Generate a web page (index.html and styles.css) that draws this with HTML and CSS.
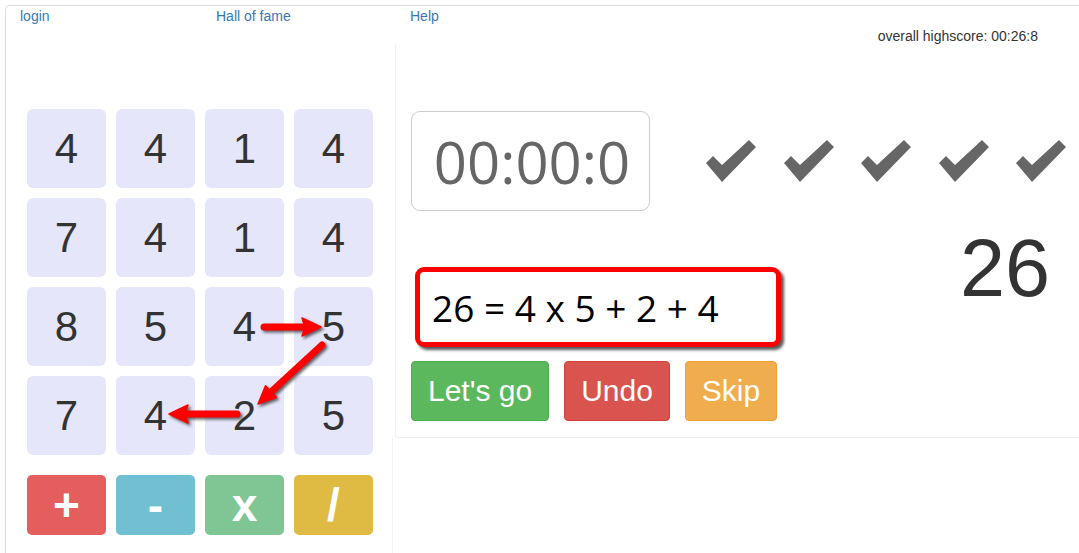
FILE: index.html
```html
<!DOCTYPE html>
<html lang="en">
<head>
<meta charset="utf-8">
<title>Numbers game</title>
<link rel="stylesheet" href="styles.css">
</head>
<body>
<div class="page">
  <nav class="nav">
    <a href="#">login</a>
    <a href="#">Hall of fame</a>
    <a href="#">Help</a>
  </nav>
  <div class="highscore">overall highscore: 00:26:8</div>
  <div class="main">
    <div class="board">
      <div class="tiles">
        <div class="tile">4</div><div class="tile">4</div><div class="tile">1</div><div class="tile">4</div>
        <div class="tile">7</div><div class="tile">4</div><div class="tile">1</div><div class="tile">4</div>
        <div class="tile">8</div><div class="tile">5</div><div class="tile">4</div><div class="tile">5</div>
        <div class="tile">7</div><div class="tile">4</div><div class="tile">2</div><div class="tile">5</div>
      </div>
      <div class="ops">
        <div class="op op-plus">+</div>
        <div class="op op-minus">-</div>
        <div class="op op-times">x</div>
        <div class="op op-div">/</div>
      </div>
    </div>
    <div class="side">
      <div class="panel">
        <div class="status">
          <div class="timer">00:00:0</div>
          <div class="checks">
            <svg class="check" viewBox="0 0 51 42"><polygon points="1,23 8,16 17,25 44,0 51,7 17,42"/></svg>
            <svg class="check" viewBox="0 0 51 42"><polygon points="1,23 8,16 17,25 44,0 51,7 17,42"/></svg>
            <svg class="check" viewBox="0 0 51 42"><polygon points="1,23 8,16 17,25 44,0 51,7 17,42"/></svg>
            <svg class="check" viewBox="0 0 51 42"><polygon points="1,23 8,16 17,25 44,0 51,7 17,42"/></svg>
            <svg class="check" viewBox="0 0 51 42"><polygon points="1,23 8,16 17,25 44,0 51,7 17,42"/></svg>
          </div>
        </div>
        <div class="play">
          <div class="play-left">
            <div class="equation">26 = 4 x 5 + 2 + 4</div>
            <div class="actions">
              <button class="btn btn-go">Let's go</button>
              <button class="btn btn-undo">Undo</button>
              <button class="btn btn-skip">Skip</button>
            </div>
          </div>
          <div class="target">26</div>
        </div>
      </div>
      <div class="panel2"></div>
    </div>
  </div>
</div>
<svg class="arrows" viewBox="0 0 1079 553" width="1079" height="553">
  <g class="arrow">
    <line x1="264" y1="327" x2="306" y2="327"/>
    <polygon points="321,327 302,318 305,327 302,336"/>
  </g>
  <g class="arrow">
    <line x1="322" y1="345" x2="272" y2="391"/>
    <polygon points="258,404 265.5,385.8 271,391.6 276.5,397.4"/>
  </g>
  <g class="arrow">
    <line x1="237" y1="414" x2="184" y2="414"/>
    <polygon points="169,414 188,405 185,414 188,423"/>
  </g>
</svg>
</body>
</html>
```
FILE: styles.css
```css
* { box-sizing: border-box; }

html, body {
  margin: 0;
  padding: 0;
  background: #fff;
}

body {
  position: relative;
  width: 1079px;
  height: 553px;
  overflow: hidden;
  font-family: "Liberation Sans", Arial, sans-serif;
  color: #333;
}

.page {
  margin: 5px 0 0 5px;
  height: 548px;
  border-top: 1px solid #ddd;
  border-left: 1px solid #ddd;
  border-top-left-radius: 5px;
  display: flex;
  flex-direction: column;
}

.nav {
  display: grid;
  grid-template-columns: 196px 194px auto;
  padding: 2px 0 0 14px;
  font-size: 14px;
  line-height: 16px;
}

.nav a {
  color: #337ab7;
  text-decoration: none;
}

.highscore {
  margin-top: 4px;
  padding-right: 41px;
  text-align: right;
  font-size: 14px;
  line-height: 16px;
  color: #333;
}

.main {
  flex: 1;
  display: flex;
}

.board {
  flex: 0 0 389px;
  width: 389px;
  padding: 65px 0 0 21px;
}

.tiles {
  display: grid;
  grid-template-columns: repeat(4, 79px);
  grid-auto-rows: 79px;
  gap: 10px;
}

.tile {
  background: #e6e6fa;
  border-radius: 6px;
  display: flex;
  align-items: center;
  justify-content: center;
  font-size: 42px;
  color: #333;
}

.ops {
  margin-top: 20px;
  display: grid;
  grid-template-columns: repeat(4, 79px);
  gap: 10px;
}

.op {
  height: 60px;
  border-radius: 5px;
  display: flex;
  align-items: center;
  justify-content: center;
  color: #fff;
  font-size: 46px;
  font-weight: bold;
}

.op-plus { background: #e55e5e; }
.op-minus { background: #70c0d2; }
.op-times { background: #7fc694; }
.op-div { background: #dfbb43; }

.side {
  flex: 1 1 auto;
  min-width: 0;
  display: flex;
  flex-direction: column;
}

.panel {
  border-left: 1px solid #f0f0f0;
  border-bottom: 1px solid #eeeeee;
  border-bottom-left-radius: 4px;
  padding: 67px 29px 16px 15px;
}

.panel2 {
  flex: 1;
  margin-left: -3px;
  border-left: 1px solid #f3f3f3;
}

.status {
  display: flex;
  align-items: center;
}

.timer {
  flex: 0 0 239px;
  width: 239px;
  height: 100px;
  border: 1px solid #ccc;
  border-radius: 9px;
  display: flex;
  align-items: center;
  justify-content: center;
  padding-left: 3px;
  font-family: "Open Sans", "Liberation Sans", sans-serif;
  font-size: 58px;
  color: #666;
}

.checks {
  display: flex;
  gap: 26.5px;
  margin-left: 55px;
}

.check {
  flex: 0 0 51px;
  width: 51px;
  height: 42px;
  fill: #666;
}

.play {
  margin-top: 17px;
  display: flex;
  justify-content: space-between;
  align-items: flex-start;
}

.equation {
  margin: 39px 0 0 4px;
  width: 366px;
  height: 80px;
  border: 5px solid #ff0000;
  border-radius: 9px;
  box-shadow: 3px 3px 3px rgba(0, 0, 0, 0.65);
  display: flex;
  align-items: center;
  padding-left: 12px;
  font-family: "Open Sans", "Liberation Sans", sans-serif;
  font-size: 37px;
  color: #000;
  background: #fff;
}

.actions {
  margin-top: 14px;
  display: flex;
  gap: 15px;
}

.btn {
  height: 60px;
  padding: 0 16px;
  border: 1px solid transparent;
  border-radius: 4px;
  font-family: "Liberation Sans", Arial, sans-serif;
  font-size: 30px;
  color: #fff;
}

.btn-go { background: #5cb85c; border-color: #4cae4c; }
.btn-undo { background: #d9534f; border-color: #d43f3a; }
.btn-skip { background: #f0ad4e; border-color: #eea236; }

.target {
  font-size: 81px;
  line-height: 81px;
  color: #333;
}

.arrows {
  position: absolute;
  left: 0;
  top: 0;
  pointer-events: none;
  filter: drop-shadow(2px 2px 1.5px rgba(0, 0, 0, 0.6));
}

.arrow line {
  stroke: #ff0000;
  stroke-width: 7;
  stroke-linecap: round;
}

.arrow polygon {
  fill: #ff0000;
  stroke: #ff0000;
  stroke-width: 1.5;
  stroke-linejoin: round;
}
```
